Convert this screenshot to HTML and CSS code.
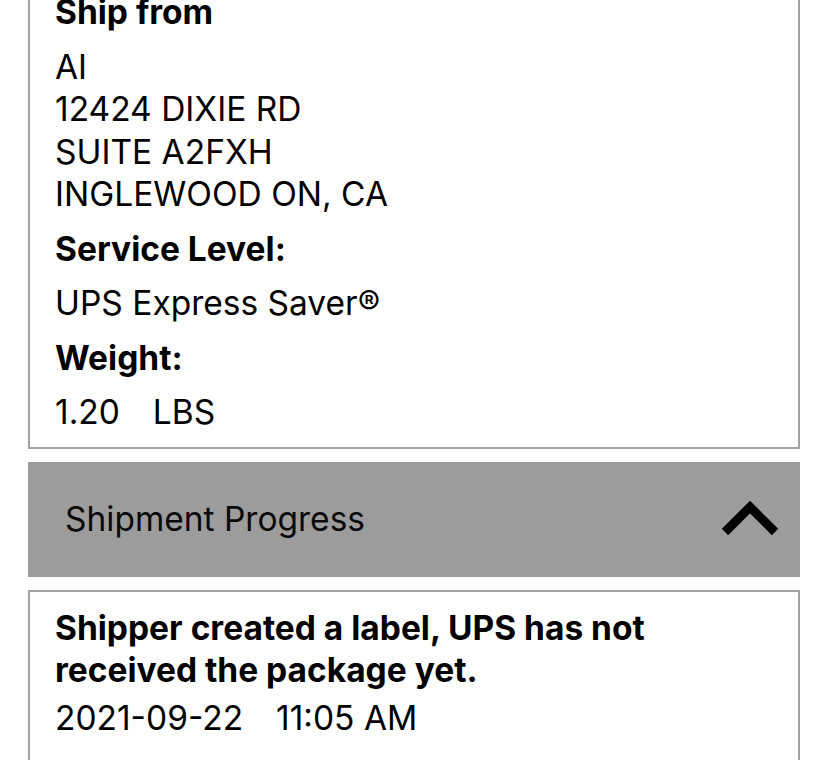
FILE: index.html
```html
<!DOCTYPE html>
<html lang="en">
<head>
<meta charset="utf-8">
<title>Shipment Details</title>
<link rel="stylesheet" href="styles.css">
</head>
<body>
<main class="page">
  <section class="card card-details">
    <div class="block">
      <div class="label">Ship from</div>
    </div>
    <div class="block address">
      <div class="line">AI</div>
      <div class="line">12424 DIXIE RD</div>
      <div class="line">SUITE A2FXH</div>
      <div class="line">INGLEWOOD ON, CA</div>
    </div>
    <div class="block"><div class="label">Service Level:</div></div>
    <div class="block"><div class="line">UPS Express Saver®</div></div>
    <div class="block"><div class="label">Weight:</div></div>
    <div class="block"><div class="line pair"><span>1.20</span><span>LBS</span></div></div>
  </section>

  <button class="accordion" type="button">
    <span class="accordion-title">Shipment Progress</span>
    <svg class="chevron" width="60" height="40" viewBox="0 0 60 40" aria-hidden="true">
      <polyline points="5,33 30,8 55,33" fill="none" stroke="#000" stroke-width="9" stroke-linejoin="miter" stroke-linecap="butt"/>
    </svg>
  </button>

  <section class="card card-progress">
    <div class="event-title">Shipper created a label, UPS has not received the package yet.</div>
    <div class="line pair event-date"><span>2021-09-22</span><span>11:05 AM</span></div>
  </section>
</main>
</body>
</html>
```

FILE: styles.css
```css
html, body {
  margin: 0;
  padding: 0;
  background: #ffffff;
}

body {
  font-family: Inter, "Liberation Sans", Arial, sans-serif;
  font-size: 33.5px;
  color: #000;
  overflow: hidden;
}

.page {
  display: flex;
  flex-direction: column;
  gap: 13px;
  padding: 0 27px 0 28px;
}

.card {
  border: 2px solid #a3a3a3;
  padding: 0 25px;
}

.card-details {
  margin-top: -20px;
  padding-top: 9px;
  padding-bottom: 13px;
  display: flex;
  flex-direction: column;
  gap: 12px;
}

.label {
  font-weight: 700;
  line-height: 42.5px;
}

.line {
  line-height: 42.5px;
}

.pair {
  display: flex;
  gap: 33px;
}

.accordion {
  display: flex;
  align-items: center;
  justify-content: space-between;
  height: 115px;
  border: none;
  margin: 0;
  padding: 0 20px 0 37px;
  background: #9c9c9c;
  font: inherit;
  color: #0a0a0a;
  text-align: left;
}

.accordion-title {
  font-size: 33.5px;
}

.chevron {
  display: block;
  margin-top: -1px;
}

.card-progress {
  padding-top: 15px;
  padding-bottom: 40px;
}

.event-title {
  font-weight: 700;
  line-height: 42px;
}

.event-date {
  margin-top: 6px;
}
```
